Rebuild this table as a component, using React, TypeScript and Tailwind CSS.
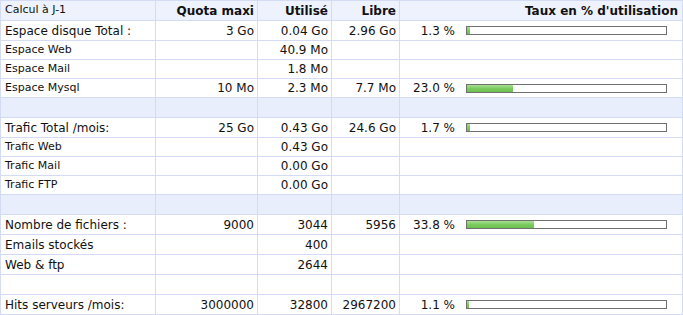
import React from 'react';

type Row =
  | { kind: 'band' }
  | { kind: 'blank' }
  | {
      kind: 'data';
      label: string;
      quota?: string;
      used?: string;
      free?: string;
      pct?: number;
      main?: boolean;
      big?: boolean;
    };

const rows: Row[] = [
  { kind: 'data', label: 'Espace disque Total :', quota: '3 Go', used: '0.04 Go', free: '2.96 Go', pct: 1.3, main: true, big: true },
  { kind: 'data', label: 'Espace Web', used: '40.9 Mo' },
  { kind: 'data', label: 'Espace Mail', used: '1.8 Mo' },
  { kind: 'data', label: 'Espace Mysql', quota: '10 Mo', used: '2.3 Mo', free: '7.7 Mo', pct: 23.0 },
  { kind: 'band' },
  { kind: 'data', label: 'Trafic Total /mois:', quota: '25 Go', used: '0.43 Go', free: '24.6 Go', pct: 1.7, main: true, big: true },
  { kind: 'data', label: 'Trafic Web', used: '0.43 Go' },
  { kind: 'data', label: 'Trafic Mail', used: '0.00 Go' },
  { kind: 'data', label: 'Trafic FTP', used: '0.00 Go' },
  { kind: 'band' },
  { kind: 'data', label: 'Nombre de fichiers :', quota: '9000', used: '3044', free: '5956', pct: 33.8, main: true, big: true },
  { kind: 'data', label: 'Emails stockés', used: '400', main: true, big: true },
  { kind: 'data', label: 'Web & ftp', used: '2644', main: true, big: true },
  { kind: 'blank' },
  { kind: 'data', label: 'Hits serveurs /mois:', quota: '3000000', used: '32800', free: '2967200', pct: 1.1, main: true, big: true },
];

const cell = 'border-r border-b border-[#d3dcf4] flex items-center';

function Bar({ pct }: { pct: number }) {
  return (
    <div className="ml-[11px] w-[201px] h-[9px] border border-[#707070] bg-white flex">
      <div
        className="h-full bg-gradient-to-b from-[#a8de92] via-[#7ccb60] to-[#6bbf4e]"
        style={{ width: `${(pct / 100) * 199}px` }}
      />
    </div>
  );
}

export default function App() {
  return (
    <div
      className="w-[683px] h-[315px] bg-white text-[#111] overflow-hidden"
      style={{ fontFamily: '"DejaVu Sans", Verdana, sans-serif' }}
    >
      <div className="grid grid-cols-[155px_102px_74px_68px_283px] border-l border-t border-[#d3dcf4]">
        {/* header */}
        <div className={`${cell} h-[20px] bg-[#eef2fc] pl-[4px] text-[11px]`}>Calcul à J-1</div>
        <div className={`${cell} h-[20px] bg-[#eef2fc] justify-end pr-[3px] text-[12px] font-bold`}>Quota maxi</div>
        <div className={`${cell} h-[20px] bg-[#eef2fc] justify-end pr-[3px] text-[12px] font-bold`}>Utilisé</div>
        <div className={`${cell} h-[20px] bg-[#eef2fc] justify-end pr-[3px] text-[12px] font-bold`}>Libre</div>
        <div className={`${cell} h-[20px] bg-[#eef2fc] justify-end pr-[4px] text-[12px] font-bold`}>Taux en % d'utilisation</div>

        {rows.map((r, i) => {
          if (r.kind === 'band' || r.kind === 'blank') {
            const bg = r.kind === 'band' ? 'bg-[#e9eefc]' : 'bg-white';
            return (
              <React.Fragment key={i}>
                <div className={`${cell} ${bg} h-[20px]`} />
                <div className={`${cell} ${bg} h-[20px]`} />
                <div className={`${cell} ${bg} h-[20px]`} />
                <div className={`${cell} ${bg} h-[20px]`} />
                <div className={`${cell} ${bg} h-[20px]`} />
              </React.Fragment>
            );
          }
          const h = r.main ? 'h-[20px]' : 'h-[19px]';
          const size = r.big ? 'text-[12px]' : 'text-[11px]';
          return (
            <React.Fragment key={i}>
              <div className={`${cell} ${h} ${size} pl-[4px]`}>{r.label}</div>
              <div className={`${cell} ${h} text-[12px] justify-end pr-[3px]`}>{r.quota}</div>
              <div className={`${cell} ${h} text-[12px] justify-end pr-[3px]`}>{r.used}</div>
              <div className={`${cell} ${h} text-[12px] justify-end pr-[3px]`}>{r.free}</div>
              <div className={`${cell} ${h} text-[12px]`}>
                {r.pct !== undefined && (
                  <>
                    <span className="w-[55px] text-right">{r.pct.toFixed(1)} %</span>
                    <Bar pct={r.pct} />
                  </>
                )}
              </div>
            </React.Fragment>
          );
        })}
      </div>
    </div>
  );
}
